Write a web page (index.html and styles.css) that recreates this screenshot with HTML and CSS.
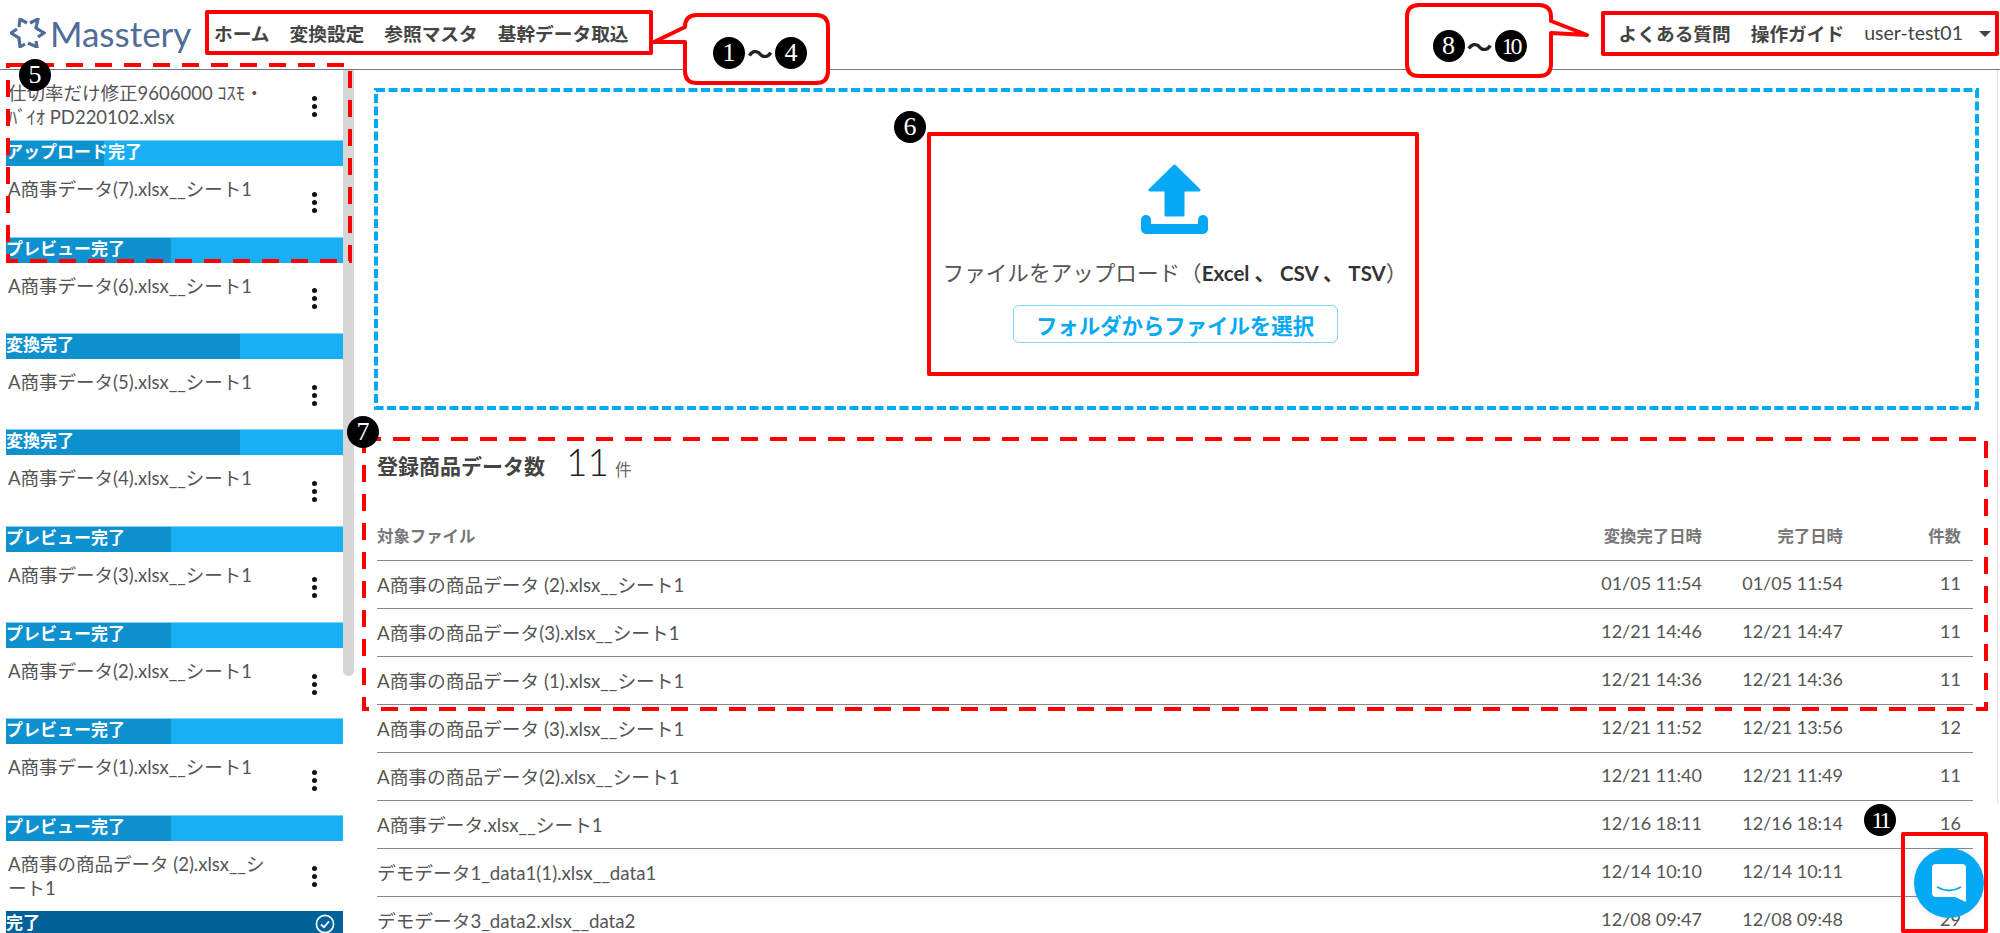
FILE: index.html
```html
<!DOCTYPE html>
<html lang="ja">
<head>
<meta charset="utf-8">
<title>Masstery</title>
<link rel="stylesheet" href="styles.css">
</head>
<body>
<header class="header">
  <div class="logo">
    <svg class="logo-star" viewBox="0 0 36 30"><g fill="none" stroke="#4f6d96" stroke-width="3.2" stroke-linejoin="miter"><path d="M17 5 10 1 9 9"/><path d="M20 5 28 1 26 10 34 15 28 19"/><path d="M26 23 27 29 18 25"/><path d="M15 26 10 29 9 20 1 15 7 11"/></g></svg>
    <span class="logo-text">Masstery</span>
  </div>
  <nav class="nav">
    <a>ホーム</a><a>変換設定</a><a>参照マスタ</a><a>基幹データ取込</a>
  </nav>
  <div class="nav-right">
    <a>よくある質問</a><a>操作ガイド</a><span class="user">user-test01</span><i class="caret"></i>
  </div>
</header>

<div class="body-row">
  <aside class="side">
    <div class="list">
      <div class="item">
        <div class="row"><div class="name">仕切率だけ修正9606000 ｺｽﾓ・<br>ﾊﾞｲｵ PD220102.xlsx</div><div class="dots"><b></b><b></b><b></b></div></div>
        <div class="bar upload">アップロード完了</div>
      </div>
      <div class="item">
        <div class="row"><div class="name">A商事データ(7).xlsx__シート1</div><div class="dots"><b></b><b></b><b></b></div></div>
        <div class="bar preview">プレビュー完了</div>
      </div>
      <div class="item">
        <div class="row"><div class="name">A商事データ(6).xlsx__シート1</div><div class="dots"><b></b><b></b><b></b></div></div>
        <div class="bar convert">変換完了</div>
      </div>
      <div class="item">
        <div class="row"><div class="name">A商事データ(5).xlsx__シート1</div><div class="dots"><b></b><b></b><b></b></div></div>
        <div class="bar convert">変換完了</div>
      </div>
      <div class="item">
        <div class="row"><div class="name">A商事データ(4).xlsx__シート1</div><div class="dots"><b></b><b></b><b></b></div></div>
        <div class="bar preview">プレビュー完了</div>
      </div>
      <div class="item">
        <div class="row"><div class="name">A商事データ(3).xlsx__シート1</div><div class="dots"><b></b><b></b><b></b></div></div>
        <div class="bar preview">プレビュー完了</div>
      </div>
      <div class="item">
        <div class="row"><div class="name">A商事データ(2).xlsx__シート1</div><div class="dots"><b></b><b></b><b></b></div></div>
        <div class="bar preview">プレビュー完了</div>
      </div>
      <div class="item">
        <div class="row"><div class="name">A商事データ(1).xlsx__シート1</div><div class="dots"><b></b><b></b><b></b></div></div>
        <div class="bar preview">プレビュー完了</div>
      </div>
      <div class="item">
        <div class="row"><div class="name">A商事の商品データ (2).xlsx__シート1</div><div class="dots"><b></b><b></b><b></b></div></div>
        <div class="bar done">完了
          <svg class="check" viewBox="0 0 20 20"><circle cx="10" cy="10" r="8.6" fill="none" stroke="#fff" stroke-width="1.6"/><path d="M6 10.5 9 13.2 14 7.4" fill="none" stroke="#fff" stroke-width="1.8"/></svg>
        </div>
      </div>
    </div>
    <div class="thumb"></div>
  </aside>

  <main class="main">
    <section class="drop">
      <svg class="drop-dash"><rect class="drop-rect" fill="none" stroke="#03a9f4" stroke-width="4" stroke-dasharray="9 3.5"/></svg>
      <svg class="upload-icon" viewBox="0 0 68 71"><path d="M33.5 2 9 26H25V51H42V26H58Z" fill="#03a9f4" stroke="#03a9f4" stroke-width="3" stroke-linejoin="round"/><path d="M0 56a5 5 0 0 1 10 0V60H57V56a5 5 0 0 1 10 0V65a5 5 0 0 1-5 5H5a5 5 0 0 1-5-5Z" fill="#03a9f4"/></svg>
      <p class="drop-text">ファイルをアップロード（<span class="ext">Excel 、 CSV 、 TSV</span>）</p>
      <button class="pick">フォルダからファイルを選択</button>
    </section>

    <section class="stats">
      <div class="title"><strong>登録商品データ数</strong><span class="count">11</span><span class="unit">件</span></div>
      <table class="table">
        <thead>
          <tr><th class="c-name">対象ファイル</th><th>変換完了日時</th><th>完了日時</th><th>件数</th></tr>
        </thead>
        <tbody>
          <tr><td class="c-name">A商事の商品データ (2).xlsx__シート1</td><td>01/05 11:54</td><td>01/05 11:54</td><td>11</td></tr>
          <tr><td class="c-name">A商事の商品データ(3).xlsx__シート1</td><td>12/21 14:46</td><td>12/21 14:47</td><td>11</td></tr>
          <tr><td class="c-name">A商事の商品データ (1).xlsx__シート1</td><td>12/21 14:36</td><td>12/21 14:36</td><td>11</td></tr>
          <tr><td class="c-name">A商事の商品データ (3).xlsx__シート1</td><td>12/21 11:52</td><td>12/21 13:56</td><td>12</td></tr>
          <tr><td class="c-name">A商事の商品データ(2).xlsx__シート1</td><td>12/21 11:40</td><td>12/21 11:49</td><td>11</td></tr>
          <tr><td class="c-name">A商事データ.xlsx__シート1</td><td>12/16 18:11</td><td>12/16 18:14</td><td>16</td></tr>
          <tr><td class="c-name">デモデータ1_data1(1).xlsx__data1</td><td>12/14 10:10</td><td>12/14 10:11</td><td>11</td></tr>
          <tr><td class="c-name">デモデータ3_data2.xlsx__data2</td><td>12/08 09:47</td><td>12/08 09:48</td><td>29</td></tr>
        </tbody>
      </table>
    </section>
  </main>
</div>

<div class="page-edge"></div>

<button class="chat" aria-label="chat">
  <svg viewBox="0 0 34 38"><path d="M4 0H30a4 4 0 0 1 4 4V38L23 33H4a4 4 0 0 1-4-4V4a4 4 0 0 1 4-4Z" fill="#fff"/><path d="M5 23Q17 30 29 23" fill="none" stroke="#03a9f4" stroke-width="2"/></svg>
</button>

<!-- annotations drawn on top of the screenshot -->
<div class="box box-nav"></div>
<div class="box box-right"></div>
<div class="box box-drop"></div>
<div class="box box-chat"></div>
<svg class="dash dash-side"><rect class="dash-rect" fill="none" stroke="#f00" stroke-width="4" stroke-dasharray="17 12"/></svg>
<svg class="dash dash-table"><rect class="dash-rect" fill="none" stroke="#f00" stroke-width="4" stroke-dasharray="17 12"/></svg>

<div class="callout callout-a">
  <svg class="callout-shape" viewBox="0 0 185 78"><path d="M4 32 35 17Q35 5 47 5H166Q178 5 178 17V61Q178 73 166 73H47Q35 73 35 61V32Z" fill="#fff" stroke="#f00" stroke-width="4" stroke-linejoin="round"/></svg>
  <span class="disc">1</span><span class="tilde">～</span><span class="disc">4</span>
</div>
<div class="callout callout-b">
  <svg class="callout-shape" viewBox="0 0 185 78"><path d="M146 18 182 32 146 30V61Q146 73 134 73H14Q2 73 2 61V14Q2 2 14 2H134Q146 2 146 14Z" fill="#fff" stroke="#f00" stroke-width="4" stroke-linejoin="round"/></svg>
  <span class="disc">8</span><span class="tilde">～</span><span class="disc disc-narrow">10</span>
</div>

<span class="disc badge badge-5">5</span>
<span class="disc badge badge-6">6</span>
<span class="disc badge badge-7">7</span>
<span class="disc badge badge-11 disc-narrow">11</span>
</body>
</html>
```

FILE: styles.css
```css
* { box-sizing: border-box; }
html, body { margin: 0; height: 933px; overflow: hidden; }
body {
  position: relative;
  background: #fff;
  color: #555;
  font-family: Lato, "Noto Sans CJK JP", sans-serif;
  font-size: 18px;
}

/* header */
.header {
  height: 70px;
  border-bottom: 1px solid #777;
  display: flex;
  align-items: center;
  padding: 0 9px 4px 10px;
  font-weight: 700;
  font-size: 18.7px;
  color: #444;
}
.logo { display: flex; align-items: center; gap: 4px; width: 204px; }
.logo-star { width: 36px; height: 30px; flex: none; }
.logo-text { font-size: 35px; font-weight: 400; color: #4f6d96; line-height: 40px; }
.nav { display: flex; gap: 20px; }
.nav-right { margin-left: auto; display: flex; align-items: center; gap: 20px; }
.user { font-weight: 400; font-size: 19.5px; }
.caret {
  width: 0; height: 0;
  border: 6px solid transparent;
  border-top-color: #444;
  border-bottom-width: 0;
  margin-top: 3px;
  margin-left: -4px;
}

.body-row { display: flex; height: 863px; }

/* sidebar */
.side { width: 354px; flex: none; display: flex; overflow: hidden; }
.list { width: 343px; padding-left: 6px; flex: none; }
.item { height: 96.33px; }
.row { height: 70.33px; display: flex; align-items: center; padding-left: 2px; }
.name {
  width: 263px;
  height: 70.33px;
  padding-top: 11px;
  line-height: 24px;
  font-size: 18.5px;
  color: #555;
}
.dots {
  margin-left: 41px;
  display: flex;
  flex-direction: column;
  gap: 3px;
  margin-top: 2px;
}
.dots b { display: block; width: 5px; height: 5px; border-radius: 50%; background: #111; }
.bar {
  height: 26px;
  line-height: 22px;
  font-size: 17px;
  font-weight: 700;
  color: #fff;
  display: flex;
  justify-content: space-between;
  border-top: 1px solid #7fd0f7;
}
.upload { background: linear-gradient(to right, #0f90cf 29%, #18aff5 29%); }
.preview { background: linear-gradient(to right, #0f90cf 49%, #18aff5 49%); }
.convert { background: linear-gradient(to right, #0f90cf 69.4%, #18aff5 69.4%); }
.done { background: #006298; border-top-color: #006298; }
.check { width: 20px; height: 20px; margin: 2px 8px 0 0; }
.thumb {
  width: 11px;
  height: 606px;
  background: #d6d6d6;
  border-radius: 0 0 6px 6px;
  flex: none;
}

/* main */
.main { flex: 1; padding: 18px 21px 0 20px; min-width: 0; }
.drop {
  position: relative;
  height: 322px;
  padding: 76px 3px 0 0;
  display: flex;
  flex-direction: column;
  align-items: center;
}
.drop-dash { position: absolute; inset: 0; width: 100%; height: 100%; }
.drop-rect { x: 2px; y: 2px; width: calc(100% - 4px); height: calc(100% - 4px); }
.upload-icon { width: 68px; height: 71px; }
.drop-text { margin: 24px 0 0; font-size: 21.6px; line-height: 28px; color: #555; }
.ext { color: #333; font-weight: 700; font-size: 20.5px; }
.pick {
  margin-top: 18px;
  width: 325px;
  height: 38px;
  border: 1px solid #81d4fa;
  border-radius: 6px;
  background: #fff;
  color: #03a9f4;
  font: 700 21.4px Lato, "Noto Sans CJK JP", sans-serif;
  padding: 0;
}

.stats { margin: 30px 6px 0 3px; }
.title {
  height: 50px;
  margin-bottom: 22px;
  display: flex;
  align-items: center;
}
.title strong { font-size: 21px; font-weight: 700; color: #444; width: 169px; white-space: nowrap; }
.count { font-size: 37px; font-weight: 300; color: #222; margin-left: 20px; margin-top: -8px; }
.unit { font-size: 16.5px; color: #666; margin-left: 6px; margin-top: 8px; }

.table { width: 100%; border-collapse: collapse; table-layout: fixed; }
.table tr { height: 48px; border-bottom: 1px solid #888; }
.table th, .table td { padding: 0 12px 2px 0; text-align: right; white-space: nowrap; }
.table th { width: 141px; font-size: 16.4px; font-weight: 700; color: #777; }
.table th:last-child { width: 118px; }
.table th:nth-child(2) { width: 180px; }
.table th.c-name, .table td.c-name { width: auto; text-align: left; }
.table td { font-size: 18px; color: #555; }
.table td.c-name { font-size: 18.7px; }

.page-edge { position: absolute; left: 1997px; top: 70px; width: 1px; height: 733px; background: #e2e2e2; }

/* chat launcher */
.chat {
  position: absolute;
  left: 1914px;
  top: 848px;
  width: 70px;
  height: 70px;
  border: 0;
  padding: 0;
  border-radius: 50%;
  background: #03a9f4;
  box-shadow: 0 1px 10px rgba(0,0,0,.08);
  display: flex;
  align-items: center;
  justify-content: center;
}
.chat svg { width: 34px; height: 38px; }

/* annotations */
.box { position: absolute; border: 4px solid #f00; border-radius: 2px; }
.box-nav { left: 205px; top: 10px; width: 448px; height: 45px; }
.box-right { left: 1601px; top: 11px; width: 398px; height: 45px; }
.box-drop { left: 927px; top: 132px; width: 492px; height: 244px; }
.box-chat { left: 1901px; top: 832px; width: 87px; height: 101px; }
.dash { position: absolute; }
.dash-rect { x: 2px; y: 2px; width: calc(100% - 4px); height: calc(100% - 4px); }
.dash-side { left: 6px; top: 63px; width: 346px; height: 200px; }
.dash-table { left: 362px; top: 437px; width: 1626px; height: 274px; }

.callout { position: absolute; display: flex; align-items: center; justify-content: center; }
.callout-shape { position: absolute; left: 0; top: 0; width: 185px; height: 78px; }
.callout-a { left: 650px; top: 10px; width: 185px; height: 78px; padding: 8px 0 0 35px; }
.callout-b { left: 1405px; top: 3px; width: 185px; height: 78px; padding: 8px 36px 0 0; }
.disc {
  position: relative;
  width: 32px;
  height: 32px;
  border-radius: 50%;
  background: #000;
  color: #fff;
  font: 400 26px/32px "Liberation Serif", serif;
  text-align: center;
  flex: none;
}
.disc-narrow { font-size: 24px; letter-spacing: -3px; }
.tilde { position: relative; color: #222; font: 700 26px/32px "Noto Sans CJK JP", sans-serif; width: 30px; text-align: center; }
.badge { position: absolute; }
.badge-5 { left: 19px; top: 59px; }
.badge-6 { left: 894px; top: 111px; }
.badge-7 { left: 347px; top: 416px; }
.badge-11 { left: 1864px; top: 804px; }
```
